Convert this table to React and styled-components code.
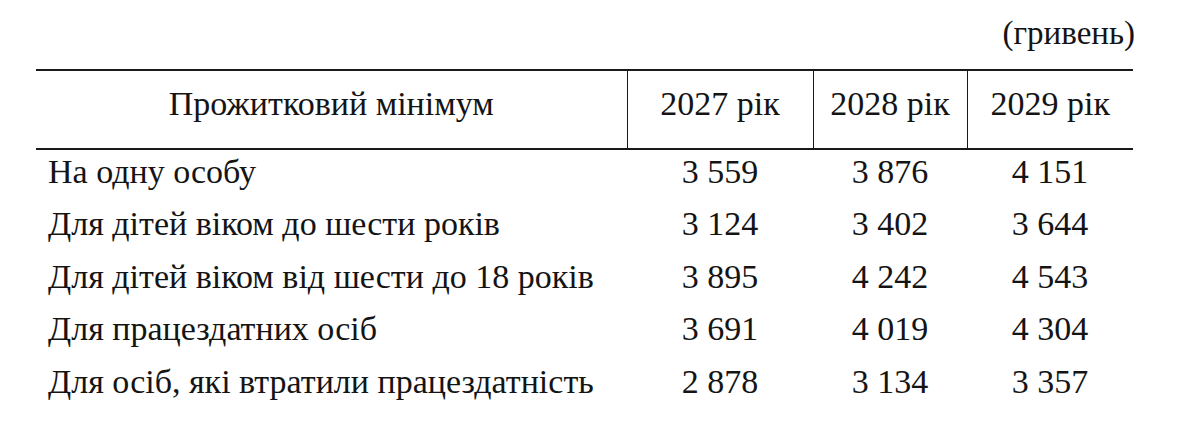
import styled, { createGlobalStyle } from 'styled-components';

const GlobalStyle = createGlobalStyle`
  html, body {
    margin: 0;
    padding: 0;
    background: #fff;
  }
  body {
    font-family: "Liberation Serif", "Times New Roman", serif;
    color: #141414;
  }
`;

const rows = [
  { label: 'На одну особу', values: ['3 559', '3 876', '4 151'] },
  { label: 'Для дітей віком до шести років', values: ['3 124', '3 402', '3 644'] },
  { label: 'Для дітей віком від шести до 18 років', values: ['3 895', '4 242', '4 543'] },
  { label: 'Для працездатних осіб', values: ['3 691', '4 019', '4 304'] },
  { label: 'Для осіб, які втратили працездатність', values: ['2 878', '3 134', '3 357'] },
];

const years = ['2027 рік', '2028 рік', '2029 рік'];
const colWidths = [591, 186, 154, 166];

export default function App() {
  return (
    <>
      <GlobalStyle />
      <Page>
        <Unit>(гривень)</Unit>
        <Table>
          <colgroup>
            {colWidths.map((w, i) => (
              <Col key={i} $w={w} />
            ))}
          </colgroup>
          <thead>
            <tr>
              <HeadCell>Прожитковий мінімум</HeadCell>
              {years.map((y) => (
                <HeadCell key={y} $divided>
                  {y}
                </HeadCell>
              ))}
            </tr>
          </thead>
          <tbody>
            {rows.map((r) => (
              <tr key={r.label}>
                <LabelCell>{r.label}</LabelCell>
                {r.values.map((v, i) => (
                  <ValueCell key={i}>{v}</ValueCell>
                ))}
              </tr>
            ))}
          </tbody>
        </Table>
      </Page>
    </>
  );
}

const Page = styled.div`
  width: 1097px;
  padding: 0 0 0 36px;
  display: flex;
  flex-direction: column;
  font-family: "Liberation Serif", "Times New Roman", serif;
`;

const Unit = styled.div`
  align-self: flex-end;
  font-size: 33px;
  line-height: 38px;
  padding-top: 14px;
  margin-right: -2px;
  height: 55px;
`;

const Table = styled.table`
  width: 1097px;
  border-collapse: collapse;
  table-layout: fixed;
  font-family: "Liberation Serif", "Times New Roman", serif;
  font-size: 34px;
  color: #141414;
  border-top: 2px solid #1a1a1a;
`;

const Col = styled.col`
  width: ${(p) => p.$w}px;
`;

const HeadCell = styled.th`
  font-weight: normal;
  text-align: center;
  line-height: 65px;
  padding: 0 0 12px;
  border-bottom: 2px solid #1a1a1a;
  border-left: ${(p) => (p.$divided ? '1px solid #1a1a1a' : 'none')};
  white-space: nowrap;
`;

const LabelCell = styled.td`
  text-align: left;
  line-height: 44px;
  padding: 0 0 8.4px 12px;
  white-space: nowrap;
`;

const ValueCell = styled.td`
  text-align: center;
  line-height: 44px;
  padding: 0 0 8.4px;
  white-space: nowrap;
`;
